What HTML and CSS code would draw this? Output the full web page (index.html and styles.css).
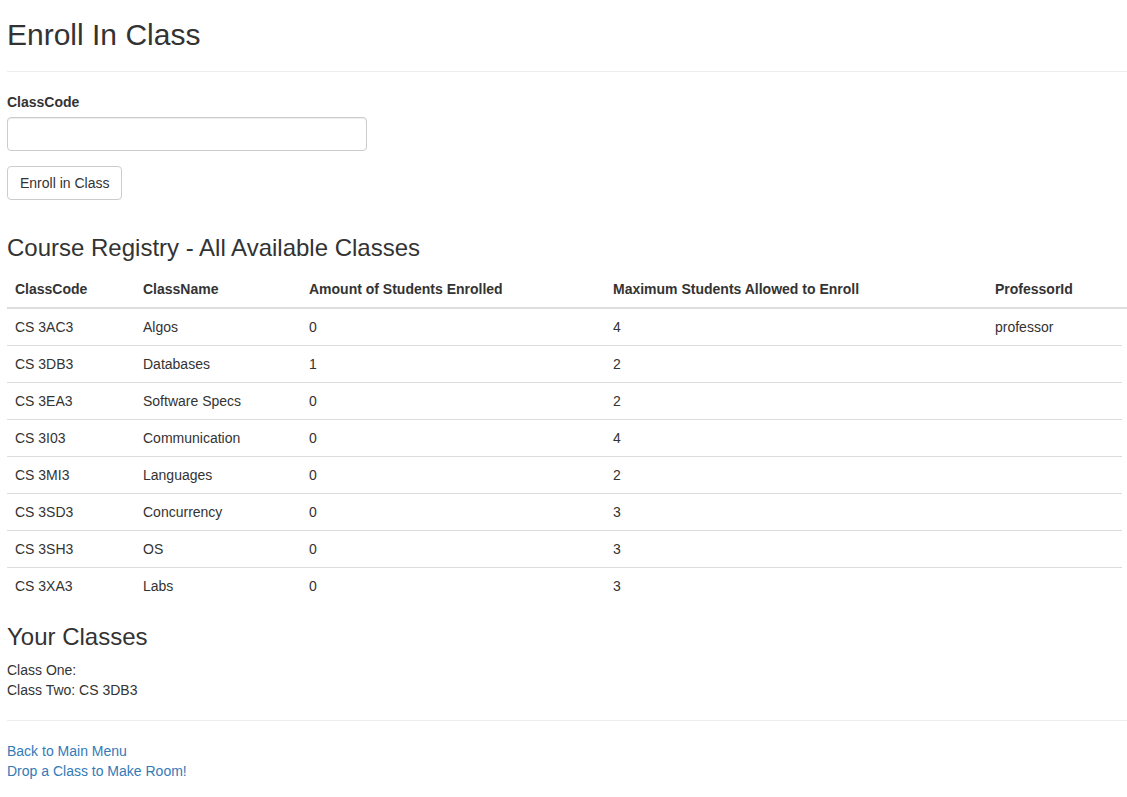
FILE: index.html
```html
<!DOCTYPE html>
<html lang="en">
<head>
<meta charset="utf-8">
<title>Enroll In Class</title>
<link rel="stylesheet" href="styles.css">
</head>
<body>
<main class="page">
  <h2 class="page-title">Enroll In Class</h2>
  <hr class="divider">
  <form class="enroll-form">
    <div class="form-group">
      <label class="field-label" for="classCode">ClassCode</label>
      <input class="form-control" id="classCode" type="text">
    </div>
    <button class="btn" type="button">Enroll in Class</button>
  </form>

  <h3 class="section-title registry-title">Course Registry - All Available Classes</h3>
  <table class="table">
    <thead>
      <tr>
        <th class="col-code">ClassCode</th>
        <th class="col-name">ClassName</th>
        <th class="col-amount">Amount of Students Enrolled</th>
        <th class="col-max">Maximum Students Allowed to Enroll</th>
        <th class="col-prof">ProfessorId</th>
        <th class="col-extra"></th>
      </tr>
    </thead>
    <tbody>
      <tr><td>CS 3AC3</td><td>Algos</td><td>0</td><td>4</td><td>professor</td></tr>
      <tr><td>CS 3DB3</td><td>Databases</td><td>1</td><td>2</td><td></td></tr>
      <tr><td>CS 3EA3</td><td>Software Specs</td><td>0</td><td>2</td><td></td></tr>
      <tr><td>CS 3I03</td><td>Communication</td><td>0</td><td>4</td><td></td></tr>
      <tr><td>CS 3MI3</td><td>Languages</td><td>0</td><td>2</td><td></td></tr>
      <tr><td>CS 3SD3</td><td>Concurrency</td><td>0</td><td>3</td><td></td></tr>
      <tr><td>CS 3SH3</td><td>OS</td><td>0</td><td>3</td><td></td></tr>
      <tr><td>CS 3XA3</td><td>Labs</td><td>0</td><td>3</td><td></td></tr>
    </tbody>
  </table>

  <h3 class="section-title classes-title">Your Classes</h3>
  <div class="my-classes">
    <div>Class One: </div>
    <div>Class Two: CS 3DB3</div>
  </div>
  <hr class="divider">
  <div class="links">
    <a href="#">Back to Main Menu</a>
    <a href="#">Drop a Class to Make Room!</a>
  </div>
</main>
</body>
</html>
```

FILE: styles.css
```css
* {
  box-sizing: border-box;
}

html, body {
  margin: 0;
  padding: 0;
  background: #fff;
}

body {
  font-family: "Liberation Sans", Arial, Helvetica, sans-serif;
  font-size: 14px;
  line-height: 20px;
  color: #333;
}

.page {
  padding: 0 0 0 7px;
}

.page-title {
  font-size: 30px;
  font-weight: 500;
  line-height: 33px;
  margin: 18px 0 10px;
}

.divider {
  margin: 20px 0;
  border: 0;
  border-top: 1px solid #eee;
  height: 0;
}

.enroll-form {
  margin: 0;
}

.form-group {
  margin-bottom: 15px;
}

.field-label {
  display: inline-block;
  margin-bottom: 5px;
  font-weight: bold;
}

.form-control {
  display: block;
  width: 360px;
  height: 34px;
  padding: 6px 12px;
  font: inherit;
  color: #555;
  background: #fff;
  border: 1px solid #ccc;
  border-radius: 4px;
  box-shadow: inset 0 1px 1px rgba(0, 0, 0, .075);
}

.btn {
  display: inline-block;
  padding: 6px 12px;
  font: inherit;
  line-height: 20px;
  color: #333;
  background: #fff;
  border: 1px solid #ccc;
  border-radius: 4px;
  cursor: pointer;
}

.section-title {
  font-size: 24px;
  font-weight: 500;
  line-height: 26.4px;
  margin: 20px 0 10px;
}

.registry-title {
  margin-top: 35px;
}

.classes-title {
  margin-bottom: 9px;
}

.table {
  width: 1120px;
  table-layout: fixed;
  border-collapse: collapse;
  border-spacing: 0;
  margin-bottom: 20px;
}

.table th,
.table td {
  padding: 8px;
  text-align: left;
  vertical-align: top;
  line-height: 20px;
}

.table th {
  font-weight: bold;
  vertical-align: bottom;
  border-bottom: 2px solid #ddd;
}

.table td {
  border-top: 1px solid #ddd;
}

.col-code { width: 128px; }
.col-name { width: 166px; }
.col-amount { width: 304px; }
.col-max { width: 382px; }
.col-prof { width: 135px; }
.table th.col-extra { width: 5px; padding: 0; }

.my-classes {
  line-height: 20px;
}

.links {
  display: flex;
  flex-direction: column;
  align-items: flex-start;
}

.links a {
  color: #337ab7;
  text-decoration: none;
}
```
